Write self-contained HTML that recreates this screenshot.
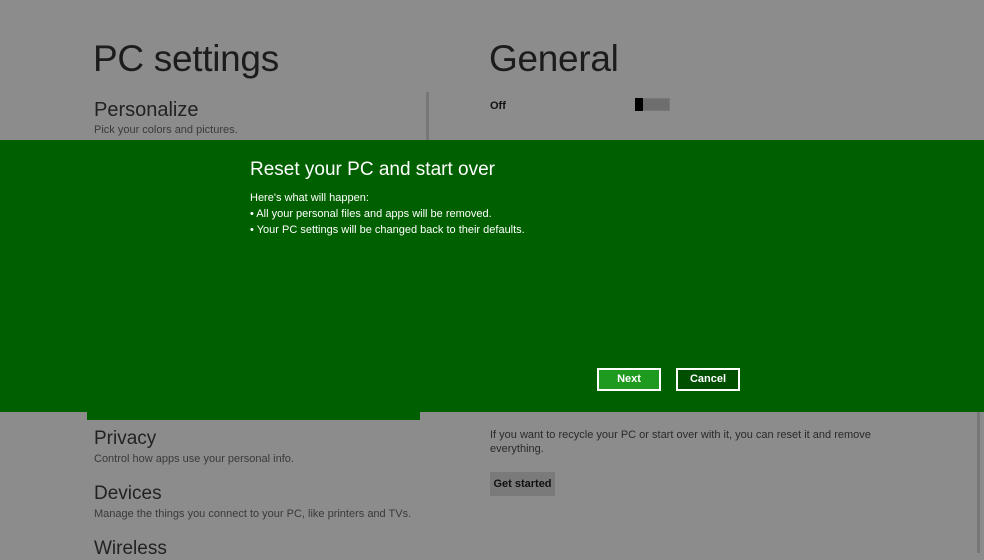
<!DOCTYPE html>
<html><head><style>
body{margin:0;width:984px;height:553px;overflow:hidden;background:#8c8c8c;font-family:"Liberation Sans",sans-serif;position:relative}
div{position:absolute}
.t{color:#111;white-space:nowrap}
.s{color:#3a3a3a;font-size:11px;white-space:nowrap}
</style></head><body>
<div class="t" style="left:93px;top:38px;font-size:37px;color:#1c1c1c;letter-spacing:-0.3px">PC settings</div>
<div class="t" style="left:489px;top:38px;font-size:37px;color:#1c1c1c;letter-spacing:-0.3px">General</div>
<div class="t" style="left:94px;top:99px;font-size:20px;color:#222">Personalize</div>
<div class="s" style="left:94px;top:124px">Pick your colors and pictures.</div>
<div style="left:426px;top:92px;width:3px;height:50px;background:#777"></div>
<div class="t" style="left:490px;top:100px;font-size:11px;font-weight:bold;color:#111">Off</div>
<div style="left:635px;top:98px;width:35px;height:13px;background:#6e6e6e;border:1px solid #777;box-sizing:border-box"></div>
<div style="left:635px;top:98px;width:8px;height:13px;background:#000"></div>
<div style="left:0;top:140px;width:984px;height:272px;background:#006000"></div>
<div style="left:87px;top:410px;width:333px;height:10px;background:#006000"></div>
<div class="t" style="left:250px;top:159px;font-size:19px;color:#fff">Reset your PC and start over</div>
<div class="t" style="left:250px;top:190px;font-size:11px;color:#fff;line-height:16px">Here's what will happen:<br>• All your personal files and apps will be removed.<br>• Your PC settings will be changed back to their defaults.</div>
<div style="left:597px;top:368px;width:64px;height:23px;box-sizing:border-box;border:2px solid #fff;background:#1e9a1e;color:#fff;font-size:11px;font-weight:bold;text-align:center;line-height:19px">Next</div>
<div style="left:676px;top:368px;width:64px;height:23px;box-sizing:border-box;border:2px solid #fff;background:#004f00;color:#fff;font-size:11px;font-weight:bold;text-align:center;line-height:19px">Cancel</div>
<div class="t" style="left:94px;top:428px;font-size:19px;color:#222">Privacy</div>
<div class="s" style="left:94px;top:453px">Control how apps use your personal info.</div>
<div class="t" style="left:94px;top:483px;font-size:19px;color:#222">Devices</div>
<div class="s" style="left:94px;top:508px">Manage the things you connect to your PC, like printers and TVs.</div>
<div class="t" style="left:94px;top:538px;font-size:19px;color:#222">Wireless</div>
<div class="s" style="left:490px;top:428px;line-height:14px;color:#2a2a2a">If you want to recycle your PC or start over with it, you can reset it and remove<br>everything.</div>
<div style="left:490px;top:472px;width:65px;height:24px;background:#7a7a7a;color:#111;font-size:11px;font-weight:bold;text-align:center;line-height:24px">Get started</div>
<div style="left:977px;top:412px;width:3px;height:141px;background:#777"></div>
</body></html>
